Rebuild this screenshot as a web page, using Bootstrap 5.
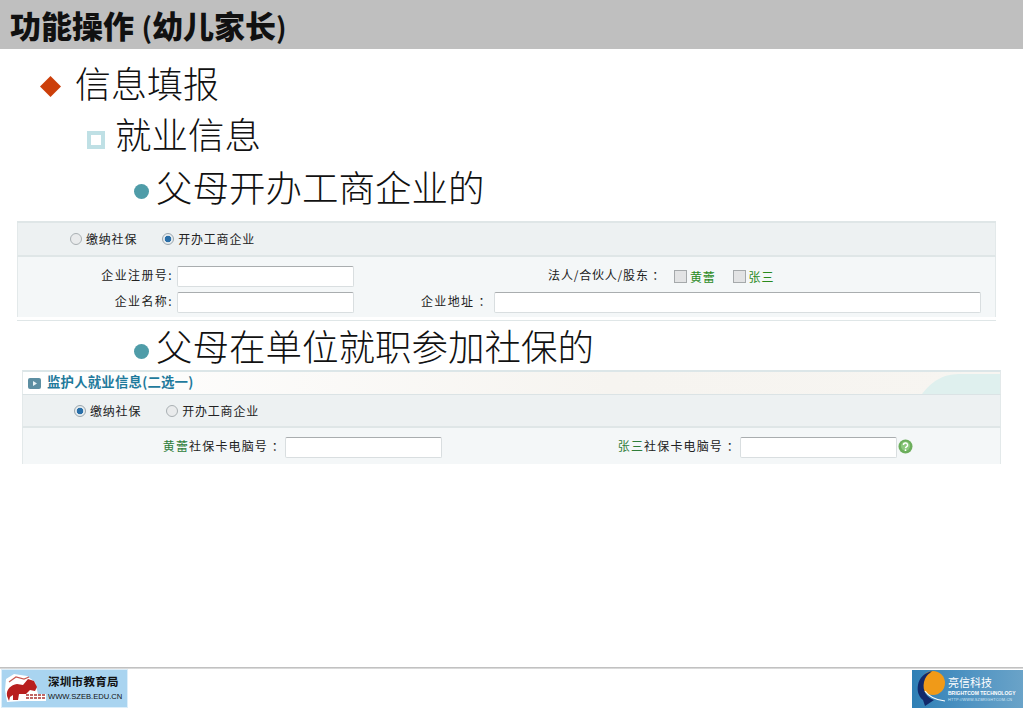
<!DOCTYPE html>
<html lang="zh">
<head>
<meta charset="utf-8">
<title>功能操作</title>
<link href="https://cdn.jsdelivr.net/npm/bootstrap@5.3.0/dist/css/bootstrap.min.css" rel="stylesheet">
<style>
html,body{height:708px;overflow:hidden;background:#fff}
body{font-family:"Noto Sans CJK SC","Liberation Sans",sans-serif;color:#000}
.slide{height:708px}
.slide-head{height:49px;background:#bfbfbf;padding-left:10px;font-size:31px;font-weight:900;line-height:50px;color:#111;overflow:hidden;white-space:nowrap}
.slide-head .par{display:inline-block;font-size:28px;font-weight:700;line-height:1}
.slide-head .par-o{width:18px;text-align:right}
.slide-head .par-c{width:14px}
.pt{font-weight:300;color:#111;white-space:nowrap;padding-bottom:2px;font-size:36.5px}
.pt1{height:52px;margin-top:8px;padding-left:40px;font-size:36px}
.pt2{height:53px;padding-left:87px}
.pt3{height:53px;padding-left:134px}
.pt4{height:46px;margin-top:3px}
.dia{width:21px;height:21px;flex:none;margin-right:14px;margin-top:9px}
.sq{width:18px;height:18px;flex:none;margin-right:10px;margin-top:11px;border:4px solid #bfe0e5;background:#fff}
.dot{width:15px;height:15px;flex:none;margin-right:7px;margin-top:8px;border-radius:50%;background:#4f9ca8}
.pt4 .dot{margin-top:10px}
.sheet{font-size:12px;letter-spacing:.8px;color:#222;line-height:1}
.sheet-a{width:979px;margin-left:17px;margin-top:6px;height:100px;border-top:2px solid #dfe6e7;border-bottom:1px solid #dfe6e7}
.sheet-b{width:979px;margin-left:22px;height:93px}
.rbar{height:33px;background:#edf1f2;border-bottom:2px solid #dfe6e7;border-left:1px solid #e3e9ea;border-right:1px solid #e3e9ea}
.sheet-a .rbar{height:34px}
.rbody{background:#f4f7f8;border-left:1px solid #e3e9ea;border-right:1px solid #e3e9ea}
.sheet-a .rbody{height:60px;padding-top:9px}
.sheet-b .rbody{height:36px;padding-top:9px;letter-spacing:1.15px}
.form-check-input.rad{width:12px;height:12px;margin:0 4px 0 0;flex:none;border:1px solid #a9b0b3;background-color:#e9ebec}
.form-check-input.rad:checked[type=radio]{background-color:#e6ecef;border-color:#9aa6ad;background-image:radial-gradient(circle,#2a6fa8 0 3px,#e6ecef 3.6px)}
.form-check-input.chk[type=checkbox]{width:13px;height:13px;margin:0 3px 0 0;flex:none;border:1px solid #a5a9ab;background-color:#e2e3e4;border-radius:0}
.lab{text-align:right;flex:none;padding-bottom:4px}
.lab-wide{letter-spacing:1.4px}
.lab-tall{line-height:17px;padding-bottom:0}
.fld{height:21px;flex:none;padding:0;border:1px solid #d9dee0;border-top-color:#a9adaf;border-radius:2px;background:#fff;min-height:0}
.grn{color:#2a8a1e}
.grn2{color:#2f7d3a}
.tbar{height:25px;border-top:2px solid #dce6e8;border-bottom:1px solid #dbe3e5;border-left:1px solid #e3e9ea;border-right:1px solid #e3e9ea;background:linear-gradient(90deg,#fff 0,#f6f4f0 60%,#f7f5f1 100%);overflow:hidden}
.tico{width:13px;height:11px;margin:0 6px 0 5px;flex:none}
.ttl{font-weight:700;font-size:13.4px;color:#1f7a9c;letter-spacing:.2px;position:relative;top:-1px}
.swoosh{width:78px;height:22px;flex:none}
.foot-line{height:2px;background:linear-gradient(#b5b5b5,#e6e6e6)}
.logo-l{width:127px;height:39px;margin-left:1px;background:#a9d4f0;border:1px solid #dceefa;overflow:hidden}
.logo-r{width:111px;height:38px;background:linear-gradient(90deg,#2f7fb5,#4f93c2 50%,#6aa3c8);overflow:hidden}
.ll1{font-size:11.5px;font-weight:700;color:#111;line-height:13px;letter-spacing:.3px;white-space:nowrap}
.ll2{font-family:"Liberation Sans",sans-serif;font-size:7.6px;color:#111;line-height:10px;white-space:nowrap}
.lr1{font-size:11px;color:#fff;line-height:13px}
.lr2{font-family:"Liberation Sans",sans-serif;font-size:5px;font-weight:700;color:#fff;line-height:8px;white-space:nowrap}
.lr3{font-family:"Liberation Sans",sans-serif;font-size:3.8px;color:#d5e8f5;line-height:6px;white-space:nowrap;letter-spacing:.2px}
.mk{flex:none}
</style>
</head>
<body>
<div class="slide d-flex flex-column">
  <div class="slide-head">功能操作<span class="par par-o">(</span>幼儿家长<span class="par par-c">)</span></div>

  <div class="pt pt1 d-flex align-items-center">
    <svg class="dia" viewBox="0 0 21 21"><polygon points="10.5,0 21,10.5 10.5,21 0,10.5" fill="#cc3f0a"/></svg>信息填报
  </div>
  <div class="pt pt2 d-flex align-items-center"><span class="sq"></span>就业信息</div>
  <div class="pt pt3 d-flex align-items-center"><span class="dot"></span>父母开办工商企业的</div>

  <div class="sheet sheet-a">
    <div class="rbar d-flex align-items-center">
      <input class="form-check-input rad" type="radio" name="a" style="margin-left:52px"><span>缴纳社保</span>
      <input class="form-check-input rad" type="radio" name="a" checked style="margin-left:25px"><span>开办工商企业</span>
    </div>
    <div class="rbody">
      <div class="d-flex align-items-center">
        <span class="lab lab-wide" style="width:155px">企业注册号:</span>
        <input class="form-control fld ms-1" style="width:177px">
        <span class="lab" style="width:311px">法人/合伙人/股东 ：</span>
        <input class="form-check-input chk" type="checkbox" style="margin-left:9px"><span class="grn">黄蕾</span>
        <input class="form-check-input chk" type="checkbox" style="margin-left:17px"><span class="grn">张三</span>
      </div>
      <div class="d-flex align-items-center" style="margin-top:5px">
        <span class="lab lab-wide" style="width:155px">企业名称:</span>
        <input class="form-control fld ms-1" style="width:177px">
        <span class="lab lab-wide" style="width:138px">企业地址 ：</span>
        <input class="form-control fld" style="width:487px;margin-left:2px">
      </div>
    </div>
  </div>

  <div class="pt pt3 pt4 d-flex align-items-center"><span class="dot"></span>父母在单位就职参加社保的</div>

  <div class="sheet sheet-b">
    <div class="tbar d-flex align-items-center">
      <svg class="tico" viewBox="0 0 13 11"><rect width="13" height="11" rx="2" fill="#5c8ea2"/><polygon points="5,3 9,5.5 5,8" fill="#e8f2f5"/></svg><span class="ttl">监护人就业信息(二选一)</span>
      <svg class="swoosh ms-auto" viewBox="0 0 78 22"><path d="M0 22C12 7 22 2 40 2H78V22Z" fill="#dff0ee"/></svg>
    </div>
    <div class="rbar d-flex align-items-center">
      <input class="form-check-input rad" type="radio" name="b" checked style="margin-left:51px"><span>缴纳社保</span>
      <input class="form-check-input rad" type="radio" name="b" style="margin-left:25px"><span>开办工商企业</span>
    </div>
    <div class="rbody d-flex align-items-start">
      <span class="lab lab-tall" style="width:262px"><span class="grn2">黄蕾</span>社保卡电脑号 ：</span>
      <input class="form-control fld" style="width:157px">
      <span class="lab lab-tall" style="width:298px"><span class="grn2">张三</span>社保卡电脑号 ：</span>
      <input class="form-control fld" style="width:157px">
      <svg class="mk" width="15" height="15" viewBox="0 0 15 15" style="margin-top:2px;margin-left:1px"><circle cx="7.5" cy="7.5" r="7" fill="#6cae5c"/><circle cx="7.5" cy="7" r="4.6" fill="#8cc97e"/><path d="M5.4 6a2.1 2 0 1 1 3 1.8c-.6.4-.9.7-.9 1.4" fill="none" stroke="#fff" stroke-width="1.5"/><circle cx="7.5" cy="11.2" r=".9" fill="#fff"/></svg>
    </div>
  </div>

  <div class="mt-auto">
    <div class="foot-line"></div>
    <div class="d-flex justify-content-between align-items-end">
      <div class="logo-l d-flex align-items-center">
        <svg class="mk" width="46" height="37" viewBox="0 0 46 37"><path d="M4 9 12 4 25 6 33 12 36 24H44V31H20L5 32 3 20Z" fill="#fff"/><path d="M5 26C4 19 9 15 15 14L21 15 26 9 32 11 35 17 33 21 28 20 24 24 17 24 16 30 11 30 11 25 8 27 7 31Z" fill="#b81f1f"/><path d="M7 12 14 7 22 9 27 7" fill="none" stroke="#c9574f" stroke-width="1.2"/><path d="M24 25H43M24 28H43" stroke="#a33" stroke-width="1.6" stroke-dasharray="3 1"/></svg>
        <div><div class="ll1">深圳市教育局</div><div class="ll2 mt-1">WWW.SZEB.EDU.CN</div></div>
      </div>
      <div class="logo-r d-flex align-items-center">
        <svg class="mk" width="34" height="38" viewBox="0 0 34 38"><circle cx="21" cy="13" r="12" fill="#f09a18"/><path d="M21 1C22 1 14 3 12 12 10 21 15 28 22 30L13 36 11 30C6 26 5 20 6 15 7 8 13 2 21 1Z" fill="#12296b"/><path d="M13 21C17 27 24 30 33 31" fill="none" stroke="#fff" stroke-width="1.2"/></svg>
        <div style="margin-left:2px"><div class="lr1">亮信科技</div><div class="lr2">BRIGHTCOM TECHNOLOGY</div><div class="lr3">HTTP://WWW.SZBRIGHTCOM.CN</div></div>
      </div>
    </div>
  </div>
</div>
</body>
</html>
